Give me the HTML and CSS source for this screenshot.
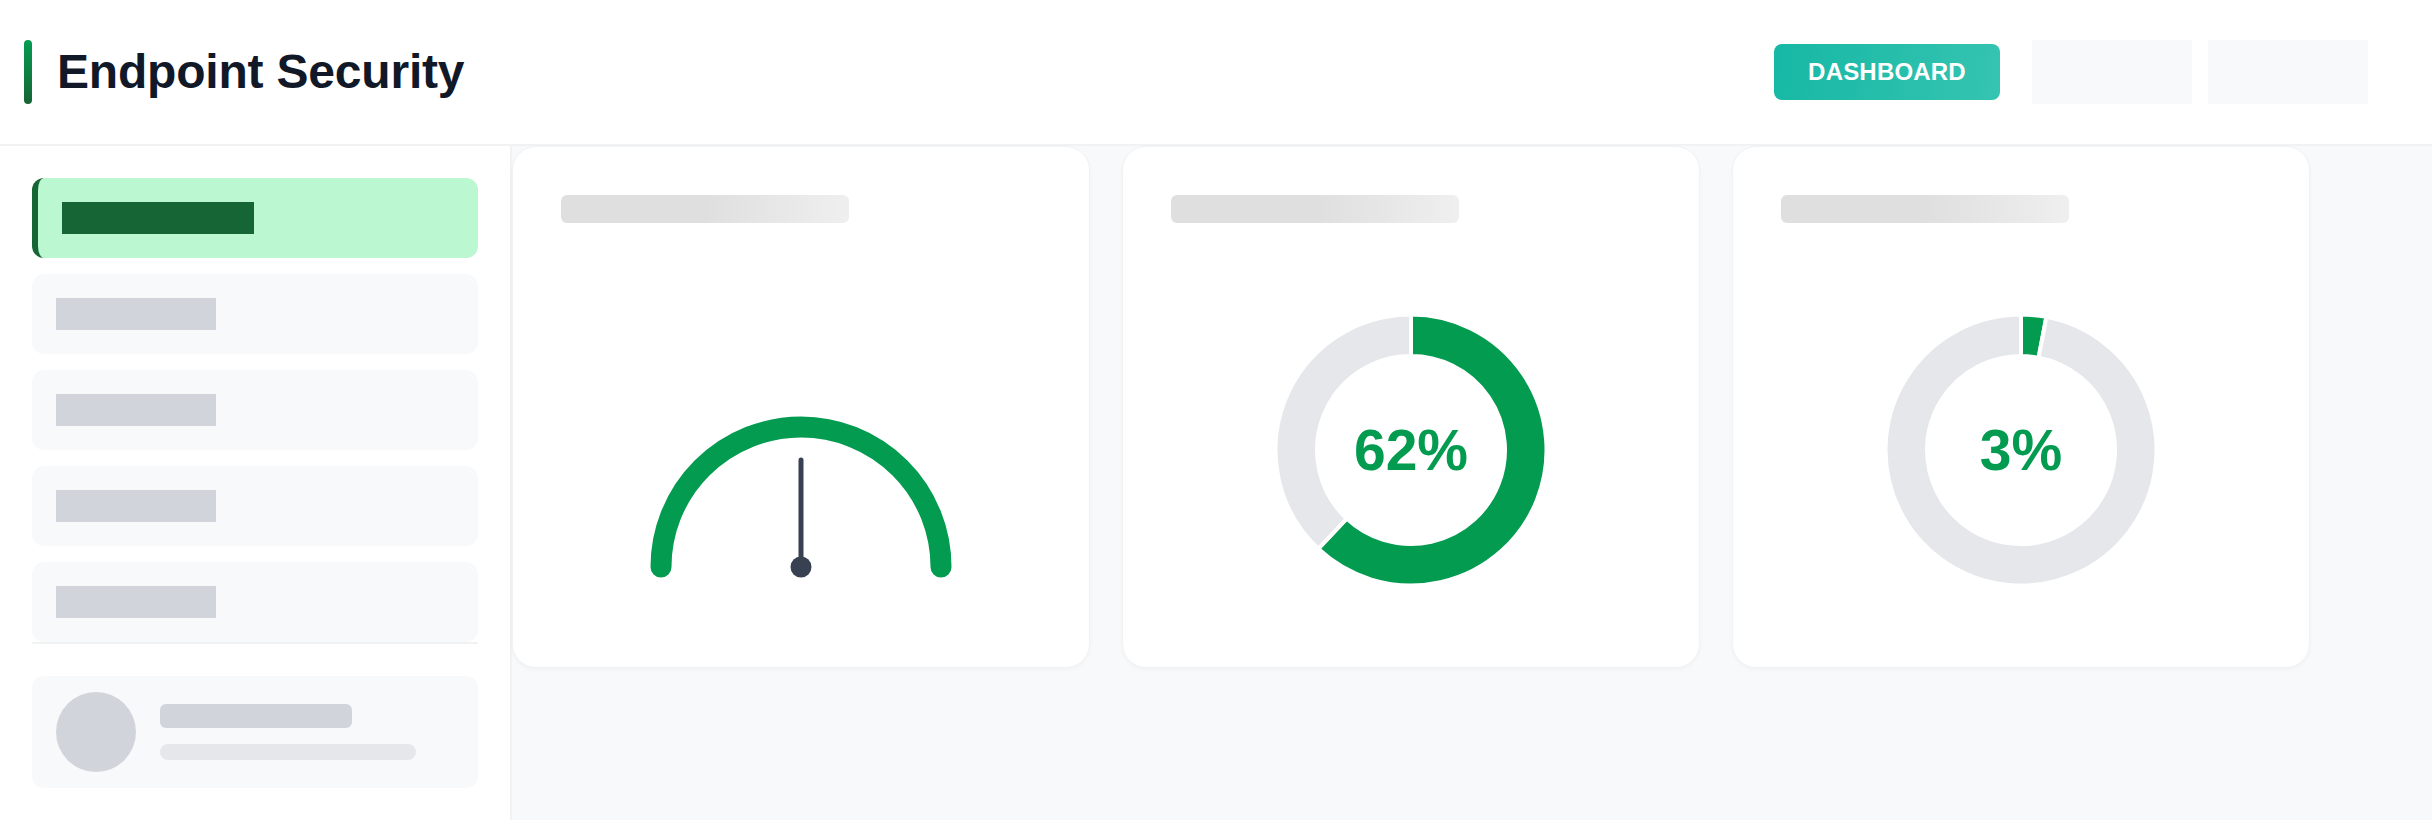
FILE: index.html
```html
<!DOCTYPE html>
<html lang="en">
<head>
<meta charset="utf-8">
<title>Endpoint Security</title>
<link rel="stylesheet" href="styles.css">
</head>
<body>
<header class="topbar">
  <div class="brand">
    <span class="brand-mark"></span>
    <h1 class="brand-title">Endpoint Security</h1>
  </div>
  <nav class="top-actions">
    <button class="btn-primary">DASHBOARD</button>
    <span class="top-ph"></span>
    <span class="top-ph"></span>
  </nav>
</header>
<div class="layout">
  <aside class="sidebar">
    <ul class="nav">
      <li class="nav-item active"><span class="nav-bar"></span></li>
      <li class="nav-item"><span class="nav-bar"></span></li>
      <li class="nav-item"><span class="nav-bar"></span></li>
      <li class="nav-item"><span class="nav-bar"></span></li>
      <li class="nav-item"><span class="nav-bar"></span></li>
    </ul>
    <div class="profile">
      <span class="avatar"></span>
      <div class="profile-lines">
        <span class="pl-name"></span>
        <span class="pl-sub"></span>
      </div>
    </div>
  </aside>
  <main class="main">
    <section class="card">
      <div class="card-title"></div>
      <div class="chart chart-gauge">
        <svg class="gauge" width="320" height="320" viewBox="0 0 320 320">
          <path d="M 20 277 A 140 140 0 0 1 300 277" fill="none" stroke="#039b50" stroke-width="21" stroke-linecap="round"/>
          <line x1="160" y1="277" x2="160" y2="170" stroke="#374151" stroke-width="5" stroke-linecap="round"/>
          <circle cx="160" cy="277" r="10.5" fill="#374151"/>
        </svg>
      </div>
    </section>
    <section class="card">
      <div class="card-title"></div>
      <div class="chart chart-donut">
        <svg class="donut" width="280" height="280" viewBox="0 0 280 280">
          <path d="M 140 4.5 A 135.5 135.5 0 1 1 47.25 238.78 L 75.66 208.53 A 94 94 0 1 0 140 46 Z" fill="#039b50" stroke="#fff" stroke-width="4"/>
          <path d="M 47.25 238.78 A 135.5 135.5 0 0 1 140 4.5 L 140 46 A 94 94 0 0 0 75.66 208.53 Z" fill="#e5e7eb" stroke="#fff" stroke-width="4"/>
        </svg>
        <span class="donut-label">62%</span>
      </div>
    </section>
    <section class="card">
      <div class="card-title"></div>
      <div class="chart chart-donut">
        <svg class="donut" width="280" height="280" viewBox="0 0 280 280">
          <path d="M 140 4.5 A 135.5 135.5 0 0 1 165.39 6.9 L 157.61 47.66 A 94 94 0 0 0 140 46 Z" fill="#039b50" stroke="#fff" stroke-width="4"/>
          <path d="M 165.39 6.9 A 135.5 135.5 0 1 1 140 4.5 L 140 46 A 94 94 0 1 0 157.61 47.66 Z" fill="#e5e7eb" stroke="#fff" stroke-width="4"/>
        </svg>
        <span class="donut-label">3%</span>
      </div>
    </section>
  </main>
</div>
</body>
</html>
```

FILE: styles.css
```css
* { box-sizing: border-box; }

html, body {
  margin: 0;
  padding: 0;
  height: 100%;
}

body {
  font-family: "Liberation Sans", Arial, sans-serif;
  background: #ffffff;
  color: #111827;
  overflow: hidden;
}

.topbar {
  height: 146px;
  display: flex;
  align-items: center;
  justify-content: space-between;
  padding: 0 64px 0 24px;
  background: #ffffff;
  border-bottom: 2px solid #f1f2f4;
}

.brand {
  display: flex;
  align-items: center;
  gap: 25px;
}

.brand-mark {
  display: block;
  width: 8px;
  height: 64px;
  border-radius: 4px;
  background: linear-gradient(180deg, #049c50 0%, #166534 100%);
}

.brand-title {
  margin: 0;
  font-size: 48px;
  font-weight: 700;
  line-height: 1;
  color: #111827;
  letter-spacing: -0.2px;
}

.top-actions {
  display: flex;
  align-items: center;
  gap: 16px;
}

.btn-primary {
  height: 56px;
  width: 226px;
  margin-right: 16px;
  border: none;
  border-radius: 8px;
  background: linear-gradient(100deg, #16b8a5 0%, #35c4b1 100%);
  color: #ffffff;
  font-family: "Liberation Sans", Arial, sans-serif;
  font-size: 24px;
  font-weight: 700;
  letter-spacing: 0.2px;
  padding: 0;
}

.top-ph {
  display: block;
  width: 160px;
  height: 64px;
  background: #f8f9fa;
}

.layout {
  display: flex;
  height: calc(100% - 146px);
}

.sidebar {
  width: 512px;
  flex: 0 0 512px;
  background: #ffffff;
  border-right: 2px solid #f1f2f4;
  padding: 32px;
}

.nav {
  list-style: none;
  margin: 0;
  padding: 0;
  display: flex;
  flex-direction: column;
  gap: 16px;
  border-bottom: 2px solid #f1f2f4;
}

.nav-item {
  height: 80px;
  padding: 24px;
  border-radius: 12px;
  background: #f8f9fa;
}

.nav-bar {
  display: block;
  width: 160px;
  height: 32px;
  background: #d1d5db;
}

.nav-item.active {
  background: #bbf7d0;
  border-left: 6px solid #166534;
}

.nav-item.active .nav-bar {
  width: 192px;
  background: #166534;
}

.profile {
  margin-top: 32px;
  height: 112px;
  padding: 16px 24px;
  border-radius: 12px;
  background: #f8f9fa;
  display: flex;
  align-items: center;
  gap: 24px;
}

.avatar {
  display: block;
  width: 80px;
  height: 80px;
  border-radius: 50%;
  background: #d1d5db;
}

.profile-lines {
  display: flex;
  flex-direction: column;
  gap: 16px;
}

.pl-name {
  display: block;
  width: 192px;
  height: 24px;
  border-radius: 6px;
  background: #d1d5db;
}

.pl-sub {
  display: block;
  width: 256px;
  height: 16px;
  border-radius: 8px;
  background: #e5e7eb;
}

.main {
  flex: 1;
  background: #f8f9fb;
  display: grid;
  grid-template-columns: repeat(3, 578px);
  column-gap: 32px;
  align-content: start;
}

.card {
  height: 522px;
  background: #ffffff;
  border: 1px solid #f1f2f4;
  border-radius: 24px;
  box-shadow: 0 2px 4px rgba(17, 24, 39, 0.03);
  padding: 48px;
}

.card-title {
  width: 60%;
  height: 28px;
  border-radius: 6px;
  background: linear-gradient(90deg, #dfdfdf 0%, #dfdfdf 50%, #efefef 100%);
}

.chart {
  margin-top: 67px;
  height: 328px;
  display: flex;
  justify-content: center;
  align-items: flex-start;
  position: relative;
}

.gauge {
  display: block;
}

.chart-donut {
  padding-top: 20px;
}

.donut {
  display: block;
}

.donut-label {
  position: absolute;
  left: 0;
  right: 0;
  top: 20px;
  height: 280px;
  display: flex;
  align-items: center;
  justify-content: center;
  font-size: 57px;
  font-weight: 700;
  color: #039b50;
  line-height: 1;
}
```
